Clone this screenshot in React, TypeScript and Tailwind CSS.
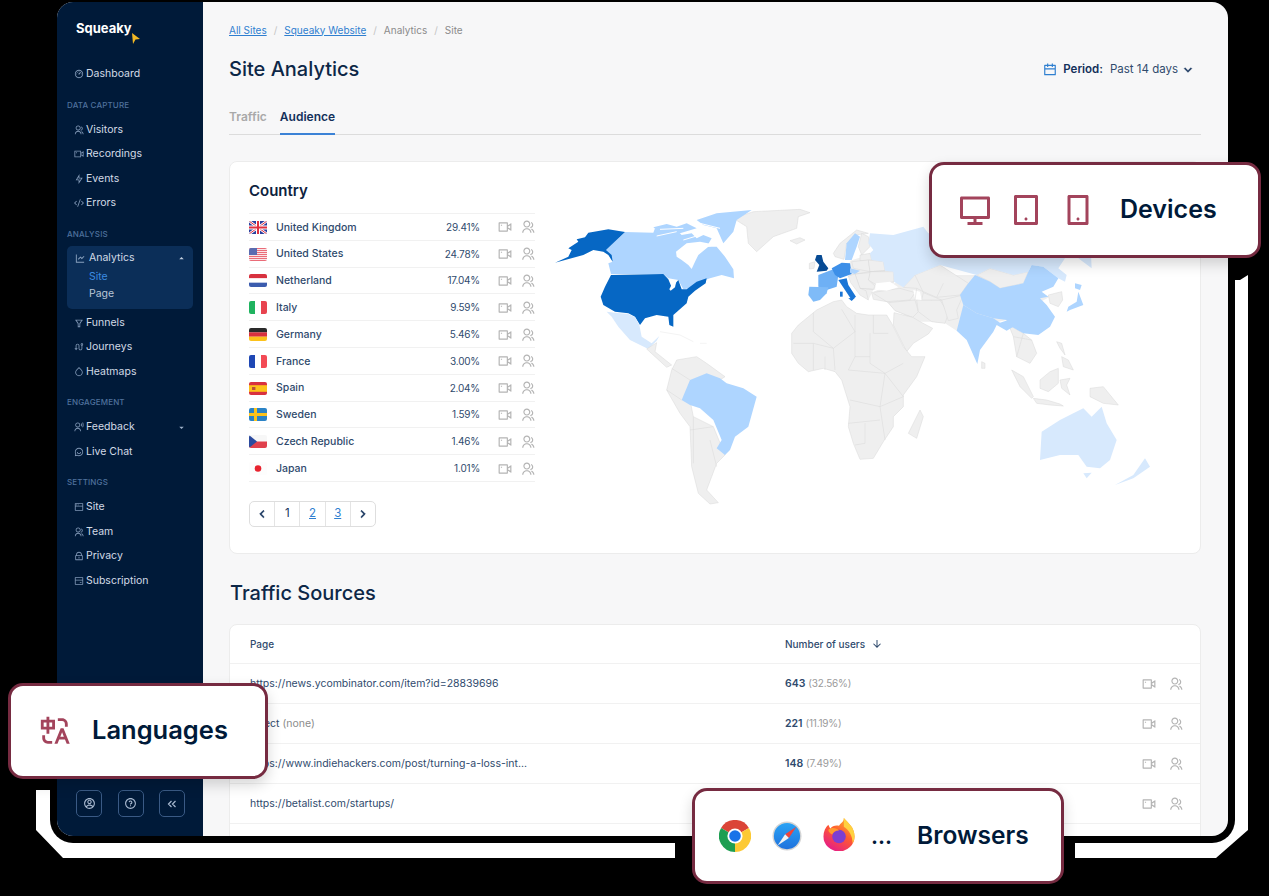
import type { ReactNode } from 'react';
import {
  RiAccountCircleLine,
  RiArrowDownLine,
  RiArrowDownSFill,
  RiArrowDownSLine,
  RiArrowLeftSLine,
  RiArrowRightSLine,
  RiArrowUpSFill,
  RiBankCardLine,
  RiCalendarLine,
  RiChatSmile2Line,
  RiCodeSSlashLine,
  RiComputerLine,
  RiDashboard3Line,
  RiDropLine,
  RiFilterLine,
  RiFlashlightLine,
  RiGroupLine,
  RiLineChartLine,
  RiLockLine,
  RiQuestionLine,
  RiRouteLine,
  RiSmartphoneLine,
  RiTabletLine,
  RiTranslate,
  RiUserVoiceLine,
  RiVidiconLine,
  RiWindowLine,
} from 'react-icons/ri';

const font = 'font-["Inter","Liberation_Sans",sans-serif]';

const countries = [
  { name: 'United Kingdom', pct: '29.41%', flag: 'uk' },
  { name: 'United States', pct: '24.78%', flag: 'us' },
  { name: 'Netherland', pct: '17.04%', flag: 'nl' },
  { name: 'Italy', pct: '9.59%', flag: 'it' },
  { name: 'Germany', pct: '5.46%', flag: 'de' },
  { name: 'France', pct: '3.00%', flag: 'fr' },
  { name: 'Spain', pct: '2.04%', flag: 'es' },
  { name: 'Sweden', pct: '1.59%', flag: 'se' },
  { name: 'Czech Republic', pct: '1.46%', flag: 'cz' },
  { name: 'Japan', pct: '1.01%', flag: 'jp' },
];

const sources = [
  { page: 'https://news.ycombinator.com/item?id=28839696', count: '643', share: '(32.56%)' },
  { page: 'Direct', muted: ' (none)', count: '221', share: '(11.19%)' },
  { page: 'https://www.indiehackers.com/post/turning-a-loss-int...', count: '148', share: '(7.49%)' },
  { page: 'https://betalist.com/startups/', count: '', share: '' },
  { page: '', count: '', share: '' },
];

function Flag({ code }: { code: string }) {
  const bands: Record<string, string[]> = {
    nl: ['#d8313f', '#ffffff', '#3b5cae'],
    de: ['#2a2a2a', '#d8313f', '#fcc21b'],
  };
  const columns: Record<string, string[]> = {
    it: ['#1fb35f', '#ffffff', '#e8434f'],
    fr: ['#1f47b4', '#ffffff', '#f34a55'],
  };
  return (
    <svg viewBox="0 0 18 13" className="w-[18px] h-[13px] rounded-[2px] shrink-0">
      {bands[code] && bands[code].map((c, i) => <rect key={i} x="0" y={i * 4.33} width="18" height="4.4" fill={c} />)}
      {columns[code] && columns[code].map((c, i) => <rect key={i} x={i * 6} y="0" width="6.1" height="13" fill={c} />)}
      {code === 'uk' && (
        <g>
          <rect width="18" height="13" fill="#2b3f9e" />
          <path d="M0 0L18 13M18 0L0 13" stroke="#fff" strokeWidth="2.6" />
          <path d="M0 0L18 13M18 0L0 13" stroke="#e0303f" strokeWidth="1" />
          <path d="M9 0V13M0 6.5H18" stroke="#fff" strokeWidth="4" />
          <path d="M9 0V13M0 6.5H18" stroke="#e0303f" strokeWidth="2" />
        </g>
      )}
      {code === 'us' && (
        <g>
          <rect width="18" height="13" fill="#fbe4e6" />
          {[0, 2, 4, 6, 8, 10, 12].map(y => <rect key={y} x="0" y={y} width="18" height="1" fill="#ea6c78" />)}
          <rect width="8" height="7" fill="#5a6bb0" />
        </g>
      )}
      {code === 'es' && (
        <g>
          <rect width="18" height="13" fill="#d8313f" />
          <rect y="3.2" width="18" height="6.6" fill="#fcc21b" />
          <rect x="3" y="5" width="3.4" height="3" fill="#b8503a" />
        </g>
      )}
      {code === 'se' && (
        <g>
          <rect width="18" height="13" fill="#2b83c6" />
          <rect x="5" width="3" height="13" fill="#fcc21b" />
          <rect y="5" width="18" height="3" fill="#fcc21b" />
        </g>
      )}
      {code === 'cz' && (
        <g>
          <rect width="18" height="6.5" fill="#f7f7f7" />
          <rect y="6.5" width="18" height="6.5" fill="#e0404c" />
          <path d="M0 0L8 6.5L0 13Z" fill="#2b4a9e" />
        </g>
      )}
      {code === 'jp' && (
        <g>
          <rect width="18" height="13" fill="#fdfdfd" />
          <circle cx="9" cy="6.5" r="3.3" fill="#e8232f" />
        </g>
      )}
    </svg>
  );
}

function NavItem({ icon, label, caret }: { icon: ReactNode; label: string; caret?: boolean }) {
  return (
    <div className="flex items-center h-[24.5px] pl-[7px] pr-[7px] pt-[2px] text-[10.5px] text-[#d3dbe6]">
      <span className="w-[12px] text-[#7f97b5] text-[10px] flex items-center">{icon}</span>
      <span>{label}</span>
      {caret && <RiArrowDownSFill className="ml-auto text-[9px] text-[#9fb3cb]" />}
    </div>
  );
}

function Heading({ children }: { children: ReactNode }) {
  return <div className="mt-[13px] mb-[6px] h-3 leading-3 text-[8px] font-medium uppercase tracking-[0.15px] text-[#4f719c]">{children}</div>;
}

function RowIcons({ gap }: { gap: string }) {
  return (
    <div className={`flex items-center text-[14px] text-[#b4b4b4] ${gap}`}>
      <RiVidiconLine />
      <RiGroupLine />
    </div>
  );
}

function FloatCard({ className, children }: { className: string; children: ReactNode }) {
  return (
    <div className={`absolute h-[96px] flex items-center bg-white border-[3.5px] border-[#762b41] rounded-[15px] shadow-[0_6px_14px_rgba(0,0,0,0.16)] ${className}`}>
      {children}
    </div>
  );
}

function WorldMap() {
  const land = '#efefef';
  const line = '#d9d9d9';
  const pale = '#d7e9fd';
  const light = '#aed5ff';
  // traced by hand, coordinates are 3x the on-screen pixels
  const grey: string[] = [
    // asia base, europe base
    '1000,275 1125,225 1310,225 1530,290 1400,360 1250,392 1215,370 1175,365 1140,365 1065,332 1040,305',
    '930,182 1000,160 1060,215 1062,250 1000,270 985,300 940,250 925,225',
    // greenland, iceland
    '580,55 640,35 780,28 810,38 775,50 770,85 700,110 650,155 625,130 620,80',
    '750,122 780,113 795,120 770,132',
    // ireland, norway, finland
    '808,190 825,185 822,205 808,207',
    '880,160 900,130 950,90 985,100 945,105 920,130 912,178 885,170',
    '955,140 965,100 985,110 990,140 965,165',
    // eastern europe
    '960,165 990,160 995,180 960,182',
    '935,185 985,180 990,215 940,205',
    '985,180 1030,185 1035,212 990,215',
    '990,215 1060,215 1062,245 1010,255 985,240',
    '945,222 990,218 985,240 1005,258 1000,268 960,265',
    '925,228 945,222 960,265 978,272 985,300 960,285 932,248',
    // turkey, middle east, arabia
    '995,278 1080,265 1125,278 1110,300 1040,305 1000,298',
    '1045,308 1125,300 1135,335 1118,352 1065,332',
    '1062,338 1118,352 1140,365 1178,385 1165,402 1120,430 1100,455 1060,375',
    '1130,300 1200,300 1225,340 1215,370 1175,365 1135,335',
    '1205,300 1270,285 1250,330 1255,355 1225,362 1215,330',
    // central asia
    '1090,262 1125,225 1200,195 1285,250 1260,285 1190,292 1150,275 1130,265',
    '1150,278 1190,294 1205,300 1175,300 1145,300',
    '1310,225 1350,205 1420,225 1465,215 1450,250 1380,265 1350,245',
    // korea, south east asia, islands
    '1525,285 1565,275 1568,300 1555,320 1530,310',
    '1400,360 1420,410 1430,470 1470,490 1490,460 1475,420 1450,400 1415,380',
    '1415,510 1450,530 1480,590 1475,595 1440,560',
    '1480,595 1520,600 1560,612 1570,618 1530,615 1490,610',
    '1500,540 1530,515 1555,505 1555,550 1525,575 1500,565',
    '1560,540 1590,535 1580,555 1590,585 1565,565',
    '1650,565 1690,560 1735,615 1690,610 1650,590',
    '1550,425 1565,430 1575,465 1560,445',
    '1565,470 1585,480 1600,510 1570,500',
    '1105,700 1140,630 1150,650 1130,715',
    '1325,485 1335,490 1335,505 1325,505',
  ];
  const blue: [string, string][] = [
    // canada and arctic islands
    ['255,96 340,98 345,85 365,95 395,100 410,90 425,105 455,100 470,115 490,105 515,115 500,140 530,140 555,170 580,208 582,235 545,225 510,235 480,245 450,265 430,268 415,240 385,235 370,222 213,222 205,190 218,185 198,150', light],
    ['340,82 380,72 410,80 440,70 470,85 420,100 370,105', light],
    ['470,60 530,40 635,30 590,60 580,95 550,130 530,85 490,75', light],
    // usa + alaska
    ['213,225 370,222 385,238 395,262 415,240 425,268 440,268 470,245 500,235 497,250 465,272 445,290 440,310 400,345 400,380 388,375 385,350 350,345 315,355 300,375 285,350 265,340 225,335 190,315 182,290 195,260', '#0667c4'],
    ['45,188 85,170 95,150 85,145 115,125 110,118 135,112 145,98 205,88 255,96 198,150 215,165 218,185 205,165 190,155 160,150 130,165', '#0667c4'],
    // mexico
    ['200,335 225,338 265,342 285,352 298,375 305,410 335,430 358,408 350,422 325,447 270,420 235,380 215,350', pale],
    // south america
    ['380,570 395,510 410,480 470,470 500,490 555,530 450,600 460,650 520,680 555,765 530,790 515,830 500,870 535,908 510,912 475,880 455,800 450,680 420,640', land],
    ['425,600 450,540 500,520 540,535 560,550 610,565 650,590 625,680 585,710 570,750 555,765 530,745 545,720 520,660 480,625 450,615', light],
    // central america
    ['320,447 350,428 345,455 395,495 380,502 345,470', land],
    // europe
    ['830,165 845,165 850,185 865,205 860,212 830,215 838,195 825,180', '#064a94'],
    ['835,225 880,208 895,225 890,260 860,270 835,260', '#6eb0f5'],
    ['875,205 905,188 930,190 935,222 900,235 885,225', '#3d8fe8'],
    ['895,240 920,235 925,255 948,290 935,300 915,270 905,255', '#1a75d6'],
    ['900,275 908,275 908,290 900,290', '#1a75d6'],
    ['925,295 945,293 935,303', '#1a75d6'],
    ['808,260 865,262 860,280 840,300 820,305 805,285', '#7fbbf8'],
    ['920,130 945,100 960,110 950,140 935,180 915,180', light],
    ['930,205 960,212 945,222 930,218', light],
    // russia
    ['990,100 1060,105 1150,80 1165,100 1650,100 1655,205 1615,175 1575,175 1555,205 1580,225 1575,245 1555,235 1510,200 1475,195 1465,215 1420,225 1350,205 1310,225 1200,195 1125,225 1090,262 1062,245 1060,215 1035,212 1030,185 995,180 990,160 1000,150 985,130', pale],
    // china, india, japan
    ['1260,285 1285,250 1305,225 1350,245 1380,265 1450,250 1465,215 1475,195 1510,200 1555,235 1540,260 1505,275 1525,290 1500,295 1520,315 1545,350 1530,380 1495,405 1450,400 1415,380 1400,360 1360,355 1310,340 1270,315', light],
    ['1250,392 1270,315 1310,340 1360,355 1380,368 1405,360 1420,380 1400,392 1370,375 1360,395 1320,450 1312,492 1280,420', light],
    ['1605,250 1625,255 1620,270 1605,265', light],
    ['1615,275 1630,315 1590,330 1580,335 1585,320 1610,305', light],
    // australia, nz
    ['1505,695 1560,660 1600,640 1630,625 1655,650 1685,620 1700,670 1730,720 1710,780 1680,805 1640,800 1615,765 1560,765 1500,780', pale],
    ['1630,820 1655,818 1640,835', pale],
    ['1725,855 1780,825 1815,775 1830,800 1780,835', pale],
  ];
  const borders = [
    'M820,338 V395 L880,445 L945,395 V345',
    'M905,328 L945,395 V470 L925,510',
    'M1000,345 V400 L1045,400',
    'M990,400 V490 L1035,520 L1090,490',
    'M760,430 L820,430 L880,445 L885,510',
    'M820,430 V510 M855,470 V510',
    'M945,470 H990 M925,510 L1035,520 L1020,620 L930,600',
    'M1035,520 L1090,590 L1020,620 L1035,720',
    'M925,670 L1020,660 M975,670 V730 L945,735',
    'M395,505 L450,540 M425,600 L380,570 M450,690 L520,680 M460,650 V790 M510,720 L530,800',
    'M1000,280 L1045,308 M1125,225 L1150,278 M1210,250 L1190,292 M1125,300 L1130,265',
    'M1420,410 L1475,420 M1450,400 L1430,470',
    'M990,215 L945,222 M960,265 L1000,268 M1035,212 L990,215',
  ];
  return (
    <svg viewBox="0 0 1980 960" className="w-[660px] h-[320px] shrink-0 mt-[18px] ml-[5px]">
      {grey.map((p, i) => <polygon key={i} points={p} fill={land} stroke={i < 2 ? 'none' : line} strokeWidth="1.5" strokeLinejoin="round" />)}
      <polygon points="755,400 775,375 830,330 880,305 905,300 920,320 950,340 985,345 1040,345 1055,370 1090,440 1115,470 1155,470 1130,530 1090,585 1090,620 1060,650 1060,680 1030,725 1000,775 960,778 940,730 925,680 930,620 905,540 885,515 850,505 805,515 775,490 755,460" fill={land} stroke={line} strokeWidth="1.5" />
      {blue.map(([p, c], i) => <polygon key={i} points={p} fill={c} stroke={c === land ? line : 'none'} strokeWidth="1.5" strokeLinejoin="round" />)}
      {/* hudson bay, arctic channels, lakes and seas */}
      <polygon points="408,155 440,130 480,125 530,135 505,140 475,165 465,185 455,207 445,195 425,180 410,170" fill="#fff" />
      <path d="M350,108 L410,95 M430,120 L480,105 M360,88 L430,85 M480,70 L540,85" fill="none" stroke="#fff" strokeWidth="3" />
      <polygon points="388,268 398,248 410,240 405,262 392,272" fill="#fff" />
      <polygon points="1120,270 1140,275 1145,300 1125,298" fill="#fff" />
      <polygon points="1008,250 1050,245 1075,262 1040,272 1005,268" fill="#fff" />
      {borders.map((d, i) => <path key={i} d={d} fill="none" stroke={line} strokeWidth="1.5" />)}
      <path d="M360,395 L420,405 L460,425 M480,430 H500" fill="none" stroke="#f4f4f4" strokeWidth="3" />
    </svg>
  );
}

function Chrome() {
  return (
    <svg viewBox="0 0 32 32" className="w-[32px] h-[32px]">
      <path d="M16 16L2.1 8A16 16 0 0 1 29.9 8Z" fill="#db4437" />
      <path d="M16 16L29.9 8A16 16 0 0 1 16 32Z" fill="#fcc934" />
      <path d="M16 16L16 32A16 16 0 0 1 2.1 8Z" fill="#1e9e52" />
      <circle cx="16" cy="16" r="7.6" fill="#fff" />
      <circle cx="16" cy="16" r="5.8" fill="#1a73e8" />
    </svg>
  );
}

function Safari() {
  return (
    <svg viewBox="0 0 32 32" className="w-[30px] h-[30px]">
      <defs>
        <linearGradient id="saf" x1="0" y1="0" x2="0" y2="1">
          <stop offset="0" stopColor="#2aa3f5" />
          <stop offset="1" stopColor="#1f72dd" />
        </linearGradient>
      </defs>
      <circle cx="16" cy="16" r="15.5" fill="#d4d4d4" />
      <circle cx="16" cy="16" r="14" fill="url(#saf)" />
      <path d="M26 6L14 14L18 18Z" fill="#f0433a" />
      <path d="M6 26L14 14L18 18Z" fill="#f2f2f2" />
    </svg>
  );
}

function Firefox() {
  return (
    <svg viewBox="0 0 32 34" className="w-[32px] h-[33px]">
      <defs>
        <linearGradient id="ffx" x1="0.8" y1="0" x2="0.2" y2="1">
          <stop offset="0" stopColor="#ffb52e" />
          <stop offset="0.45" stopColor="#ff5a30" />
          <stop offset="1" stopColor="#e3178f" />
        </linearGradient>
      </defs>
      <path d="M21 0C25 5 32 9 32 19A16 15.5 0 0 1 0 19C0 14 2 10 5 7L7 11C9 8 13 7 16 8C18 5 21 4 21 0Z" fill="url(#ffx)" />
      <path d="M21 0C25 5 32 9 32 19C32 22 31 24 30 26C30 18 26 12 21 9Z" fill="#ffd13f" />
      <circle cx="16" cy="19" r="7" fill="#7d3ed1" />
      <path d="M5 12C8 9 14 10 16 13C12 13 10 15 9 17C7 16 5 14 5 12Z" fill="#ff9a2e" />
    </svg>
  );
}

function CollapseIcon() {
  return (
    <svg viewBox="0 0 12 12" className="w-[12px] h-[12px]" fill="none" stroke="currentColor" strokeWidth="1.2">
      <path d="M5.5 3L2.5 6L5.5 9M9.5 3L6.5 6L9.5 9" />
    </svg>
  );
}

export default function App() {
  return (
    <div className={`relative w-[1269px] h-[896px] overflow-hidden bg-black pl-[57px] pt-[2px] ${font}`}>
      {/* flattened drop shadow left over in the picture */}
      <div className="absolute inset-0 bg-white [clip-path:polygon(36px_790px,200px_790px,200px_280px,1240px_280px,1248px_275px,1248px_830px,1216px_858px,1075px_858px,1075px_840px,675px_840px,675px_858px,63px_858px,36px_830px)]" />

      <div className="relative flex w-[1171px] h-[834px] rounded-[16px] overflow-hidden bg-[#f7f7f8] shadow-[0_0_0_7px_#000]">
        {/* Sidebar */}
        <aside className="relative w-[146px] shrink-0 flex flex-col bg-[#001a39] pl-[10px] pr-[10px]">
          <div className="relative h-[46px] pt-[17px] pl-[9px] text-[13px] leading-[18px] font-bold text-white">
            Squeaky
            <svg viewBox="0 0 8 11" className="absolute left-[65px] top-[31px] w-[8px] h-[11px]">
              <path d="M0 0L8 6L3.5 6.5L1 11Z" fill="#f2b824" />
            </svg>
          </div>
          <div className="mt-[13px]" />
          <NavItem icon={<RiDashboard3Line />} label="Dashboard" />
          <Heading>Data capture</Heading>
          <NavItem icon={<RiGroupLine />} label="Visitors" />
          <NavItem icon={<RiVidiconLine />} label="Recordings" />
          <NavItem icon={<RiFlashlightLine />} label="Events" />
          <NavItem icon={<RiCodeSSlashLine />} label="Errors" />
          <Heading>Analysis</Heading>
          <div className="h-[63px] mb-[1px] rounded-[5px] bg-[#0b2e58] pt-[2px]">
            <div className="flex items-center h-[21px] pl-[7px] pr-[7px] text-[10.5px] text-[#d3dbe6]">
              <RiLineChartLine className="w-[12px] text-[11px] text-[#8aa2bf] mr-[3px]" />
              <span>Analytics</span>
              <RiArrowUpSFill className="ml-auto text-[9px] text-[#c3cfde]" />
            </div>
            <div className="pl-[22px] -mt-[1px] text-[10.5px] leading-[17px]">
              <div className="text-[#3c8ce0]">Site</div>
              <div className="text-[#b9c6d6]">Page</div>
            </div>
          </div>
          <NavItem icon={<RiFilterLine />} label="Funnels" />
          <NavItem icon={<RiRouteLine />} label="Journeys" />
          <NavItem icon={<RiDropLine />} label="Heatmaps" />
          <Heading>Engagement</Heading>
          <NavItem icon={<RiUserVoiceLine />} label="Feedback" caret />
          <NavItem icon={<RiChatSmile2Line />} label="Live Chat" />
          <Heading>Settings</Heading>
          <NavItem icon={<RiWindowLine />} label="Site" />
          <NavItem icon={<RiGroupLine />} label="Team" />
          <NavItem icon={<RiLockLine />} label="Privacy" />
          <NavItem icon={<RiBankCardLine />} label="Subscription" />
          <div className="mt-auto mb-[19px] ml-[9px] flex gap-[15.5px]">
            {[<RiAccountCircleLine key="a" />, <RiQuestionLine key="q" />, <CollapseIcon key="c" />].map((icon, i) => (
              <div key={i} className="w-[26px] h-[27px] rounded-[5px] border border-[#3a5a85] flex items-center justify-center text-[13px] text-[#a9bad0]">
                {icon}
              </div>
            ))}
          </div>
        </aside>

        {/* Main */}
        <main className="flex-1 min-w-0 pl-[26px] pr-[27px] pt-[20px]">
          <div className="flex items-center h-4 text-[10px] text-[#8b8b8b]">
            <span className="text-[#2f7fd0] underline">All Sites</span>
            <span className="mx-[7px] text-[#c4c4c4]">/</span>
            <span className="text-[#2f7fd0] underline">Squeaky Website</span>
            <span className="mx-[7px] text-[#c4c4c4]">/</span>
            <span>Analytics</span>
            <span className="mx-[7px] text-[#c4c4c4]">/</span>
            <span>Site</span>
          </div>

          <div className="mt-[16px] flex items-center justify-between h-[30px] pr-[6px]">
            <h1 className="text-[20px] font-medium text-[#0d2747]">Site Analytics</h1>
            <div className="flex items-center pt-[2px] text-[11.5px] text-[#2f4a6d]">
              <RiCalendarLine className="text-[14px] text-[#2f7fd0] mr-[6px]" />
              <span className="font-semibold text-[#12305a]">Period:</span>
              <span className="ml-[7px]">Past 14 days</span>
              <RiArrowDownSLine className="ml-[3px] text-[14px] text-[#12305a]" stroke="currentColor" strokeWidth={1} />
            </div>
          </div>

          <div className="mt-[21px] flex h-[30px] gap-[13px] border-b border-[#dcdcdc] text-[12px] font-semibold">
            <span className="pt-[3px] text-[#a9a9a9]">Traffic</span>
            <span className="h-[30px] pt-[3px] border-b-[2px] border-[#3b82d6] text-[#12305a]">Audience</span>
          </div>

          {/* Country card */}
          <section className="mt-[26px] h-[393px] flex bg-white border border-[#ececec] rounded-[8px] pl-[19px] pt-[20px]">
            <div className="w-[286px] shrink-0">
              <h2 className="h-4 pt-[1px] leading-4 text-[15px] font-semibold text-[#0d2240]">Country</h2>
              <div className="mt-[15px] border-b border-[#f1f1f1]">
                {countries.map(c => (
                  <div key={c.name} className="flex items-center h-[26.8px] border-t border-[#f1f1f1] pt-[1px] text-[10.5px] text-[#2f4a6d]">
                    <Flag code={c.flag} />
                    <span className="ml-[9px] flex-1 font-medium">{c.name}</span>
                    <span className="mr-[18px] text-[10px] tracking-[-0.2px]">{c.pct}</span>
                    <RowIcons gap="gap-[9px]" />
                  </div>
                ))}
              </div>
              <div className="mt-[19px] flex w-[127px] h-[26px] border border-[#dedede] rounded-[5px] text-[11.5px] text-[#12305a]">
                <div className="flex-1 flex items-center justify-center border-r border-[#e4e4e4]">
                  <RiArrowLeftSLine className="text-[14px]" stroke="currentColor" strokeWidth={1} />
                </div>
                <div className="flex-1 flex items-center justify-center border-r border-[#e4e4e4]">1</div>
                <div className="flex-1 flex items-center justify-center border-r border-[#e4e4e4] text-[#2f7fd0] underline">2</div>
                <div className="flex-1 flex items-center justify-center border-r border-[#e4e4e4] text-[#2f7fd0] underline">3</div>
                <div className="flex-1 flex items-center justify-center">
                  <RiArrowRightSLine className="text-[14px]" stroke="currentColor" strokeWidth={1} />
                </div>
              </div>
            </div>
            <WorldMap />
          </section>

          <h2 className="mt-[23px] h-[30px] pt-[1px] leading-[30px] pl-[1px] text-[20px] font-medium text-[#0d2747]">Traffic Sources</h2>

          {/* Traffic sources table */}
          <section className="mt-[17px] bg-white border border-[#ececec] rounded-[8px] overflow-hidden">
            <div className="flex items-center h-[38px] pl-[20px] pr-[17px] text-[10px] font-medium text-[#2f4a6d]">
              <span className="w-[535px]">Page</span>
              <span className="flex items-center gap-[6px]">Number of users <RiArrowDownLine className="text-[12px]" /></span>
            </div>
            {sources.map((s, i) => (
              <div key={i} className="flex items-center h-[40px] pl-[20px] pr-[17px] border-t border-[#f1f1f1] text-[10.5px] text-[#2f4a6d]">
                <span className="w-[535px]">
                  {s.page}
                  {s.muted && <span className="text-[#8b8b8b]">{s.muted}</span>}
                </span>
                <span className="flex-1">
                  <span className="font-semibold">{s.count}</span>{' '}
                  <span className="text-[10px] tracking-[-0.2px] text-[#9a9a9a]">{s.share}</span>
                </span>
                <RowIcons gap="gap-[13px]" />
              </div>
            ))}
          </section>
        </main>
      </div>

      {/* Floating feature cards */}
      <FloatCard className="left-[929px] top-[162px] w-[332px] pl-[25px]">
        <RiComputerLine className="text-[36px] text-[#a3445c]" />
        <RiTabletLine className="ml-[15px] text-[36px] text-[#a3445c]" />
        <RiSmartphoneLine className="ml-[16px] text-[36px] text-[#a3445c]" />
        <span className="ml-[24px] text-[25px] font-semibold text-[#001a39]">Devices</span>
      </FloatCard>
      <FloatCard className="left-[8px] top-[683px] w-[260px] pl-[27px]">
        <RiTranslate className="text-[34px] text-[#a3445c]" />
        <span className="ml-[20px] -mt-[2px] text-[25.5px] font-semibold text-[#001a39]">Languages</span>
      </FloatCard>
      <FloatCard className="left-[692px] top-[788px] w-[372px] pl-[24px]">
        <Chrome />
        <div className="ml-[21px]"><Safari /></div>
        <div className="ml-[21px] -mt-[3px]"><Firefox /></div>
        <span className="ml-[16px] text-[22px] font-semibold leading-none text-[#001a39]">...</span>
        <span className="ml-[25px] -mt-[2px] text-[24.5px] font-semibold text-[#001a39]">Browsers</span>
      </FloatCard>
    </div>
  );
}
